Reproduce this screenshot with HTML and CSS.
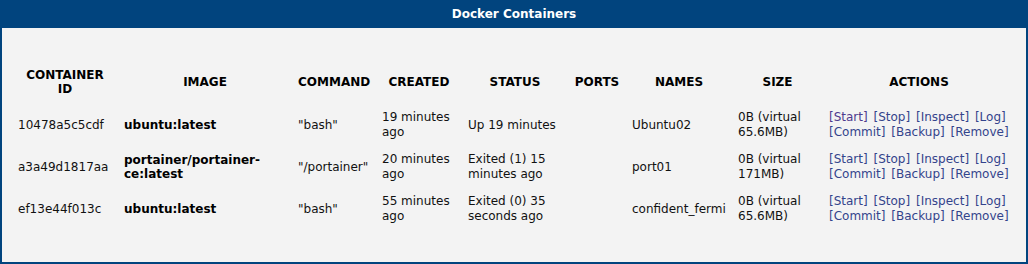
FILE: index.html
```html
<!DOCTYPE html>
<html>
	<head>
		<meta charset="UTF-8">
		<title>Docker Containers</title>
		<link rel="stylesheet" href="styles.css">
	</head>
	<body>
		<div id="box">
			<div class="title">Docker Containers</div>
			<div class="panel">
				<table class="list">
					<colgroup>
						<col class="c_id"><col class="c_image"><col class="c_cmd"><col class="c_created"><col class="c_status"><col class="c_ports"><col class="c_names"><col class="c_size"><col class="c_actions">
					</colgroup>
					<tr>
						<th>CONTAINER ID</th>
						<th>IMAGE</th>
						<th>COMMAND</th>
						<th>CREATED</th>
						<th>STATUS</th>
						<th>PORTS</th>
						<th>NAMES</th>
						<th>SIZE</th>
						<th>ACTIONS</th>
					</tr>
					<tr>
						<td>10478a5c5cdf</td>
						<td class="img">ubuntu:latest</td>
						<td>"bash"</td>
						<td>19 minutes ago</td>
						<td>Up 19 minutes</td>
						<td></td>
						<td>Ubuntu02</td>
						<td>0B (virtual 65.6MB)</td>
						<td class="actions"><a href="#" class="visited">[Start]</a> <a href="#">[Stop]</a> <a href="#">[Inspect]</a> <a href="#">[Log]</a><br><a href="#">[Commit]</a> <a href="#">[Backup]</a> <a href="#">[Remove]</a></td>
					</tr>
					<tr>
						<td>a3a49d1817aa</td>
						<td class="img">portainer/portainer-ce:latest</td>
						<td>"/portainer"</td>
						<td>20 minutes ago</td>
						<td>Exited (1) 15 minutes ago</td>
						<td></td>
						<td>port01</td>
						<td>0B (virtual 171MB)</td>
						<td class="actions"><a href="#">[Start]</a> <a href="#">[Stop]</a> <a href="#">[Inspect]</a> <a href="#">[Log]</a><br><a href="#">[Commit]</a> <a href="#">[Backup]</a> <a href="#">[Remove]</a></td>
					</tr>
					<tr>
						<td>ef13e44f013c</td>
						<td class="img">ubuntu:latest</td>
						<td>"bash"</td>
						<td>55 minutes ago</td>
						<td>Exited (0) 35 seconds ago</td>
						<td></td>
						<td>confident_fermi</td>
						<td>0B (virtual 65.6MB)</td>
						<td class="actions"><a href="#">[Start]</a> <a href="#">[Stop]</a> <a href="#">[Inspect]</a> <a href="#">[Log]</a><br><a href="#">[Commit]</a> <a href="#">[Backup]</a> <a href="#">[Remove]</a></td>
					</tr>
				</table>
			</div>
		</div>
	</body>
</html>
```

FILE: styles.css
```css
*{margin: 0;padding: 0;}
body{
	font-family: "DejaVu Sans", Verdana, sans-serif;
	font-size: 12px;
	color: #111;
	background: #fff;
}
#box{
	width: 1024px;
	height: 262px;
	border: 2px solid #01447e;
	border-top: none;
	background: #f3f3f3;
}
.title{
	height: 28px;
	line-height: 28px;
	background: #01447e;
	color: #fff;
	font-weight: bold;
	font-size: 12px;
	text-align: center;
}
.panel{
	padding: 32px 10px 0 10px;
}
.list{
	table-layout: fixed;
	border-collapse: collapse;
	width: 1003px;
}
.c_id{width: 106px;}
.c_image{width: 174px;}
.c_cmd{width: 84px;}
.c_created{width: 86px;}
.c_status{width: 106px;}
.c_ports{width: 58px;}
.c_names{width: 106px;}
.c_size{width: 91px;}
.c_actions{width: 192px;}
.list th{
	font-weight: bold;
	color: #000;
	text-align: center;
	line-height: 14px;
	padding: 8px 6px;
	vertical-align: middle;
}
.list td{
	line-height: 15px;
	padding: 6px 6px;
	vertical-align: middle;
	text-align: left;
}
.list td.img{
	font-weight: bold;
	color: #000;
	line-height: 14px;
}
.list td.actions{
	word-spacing: 2px;
	white-space: nowrap;
}
a{
	color: #33448c;
	text-decoration: none;
}
a.visited{
	color: #4e3a8e;
}
```
